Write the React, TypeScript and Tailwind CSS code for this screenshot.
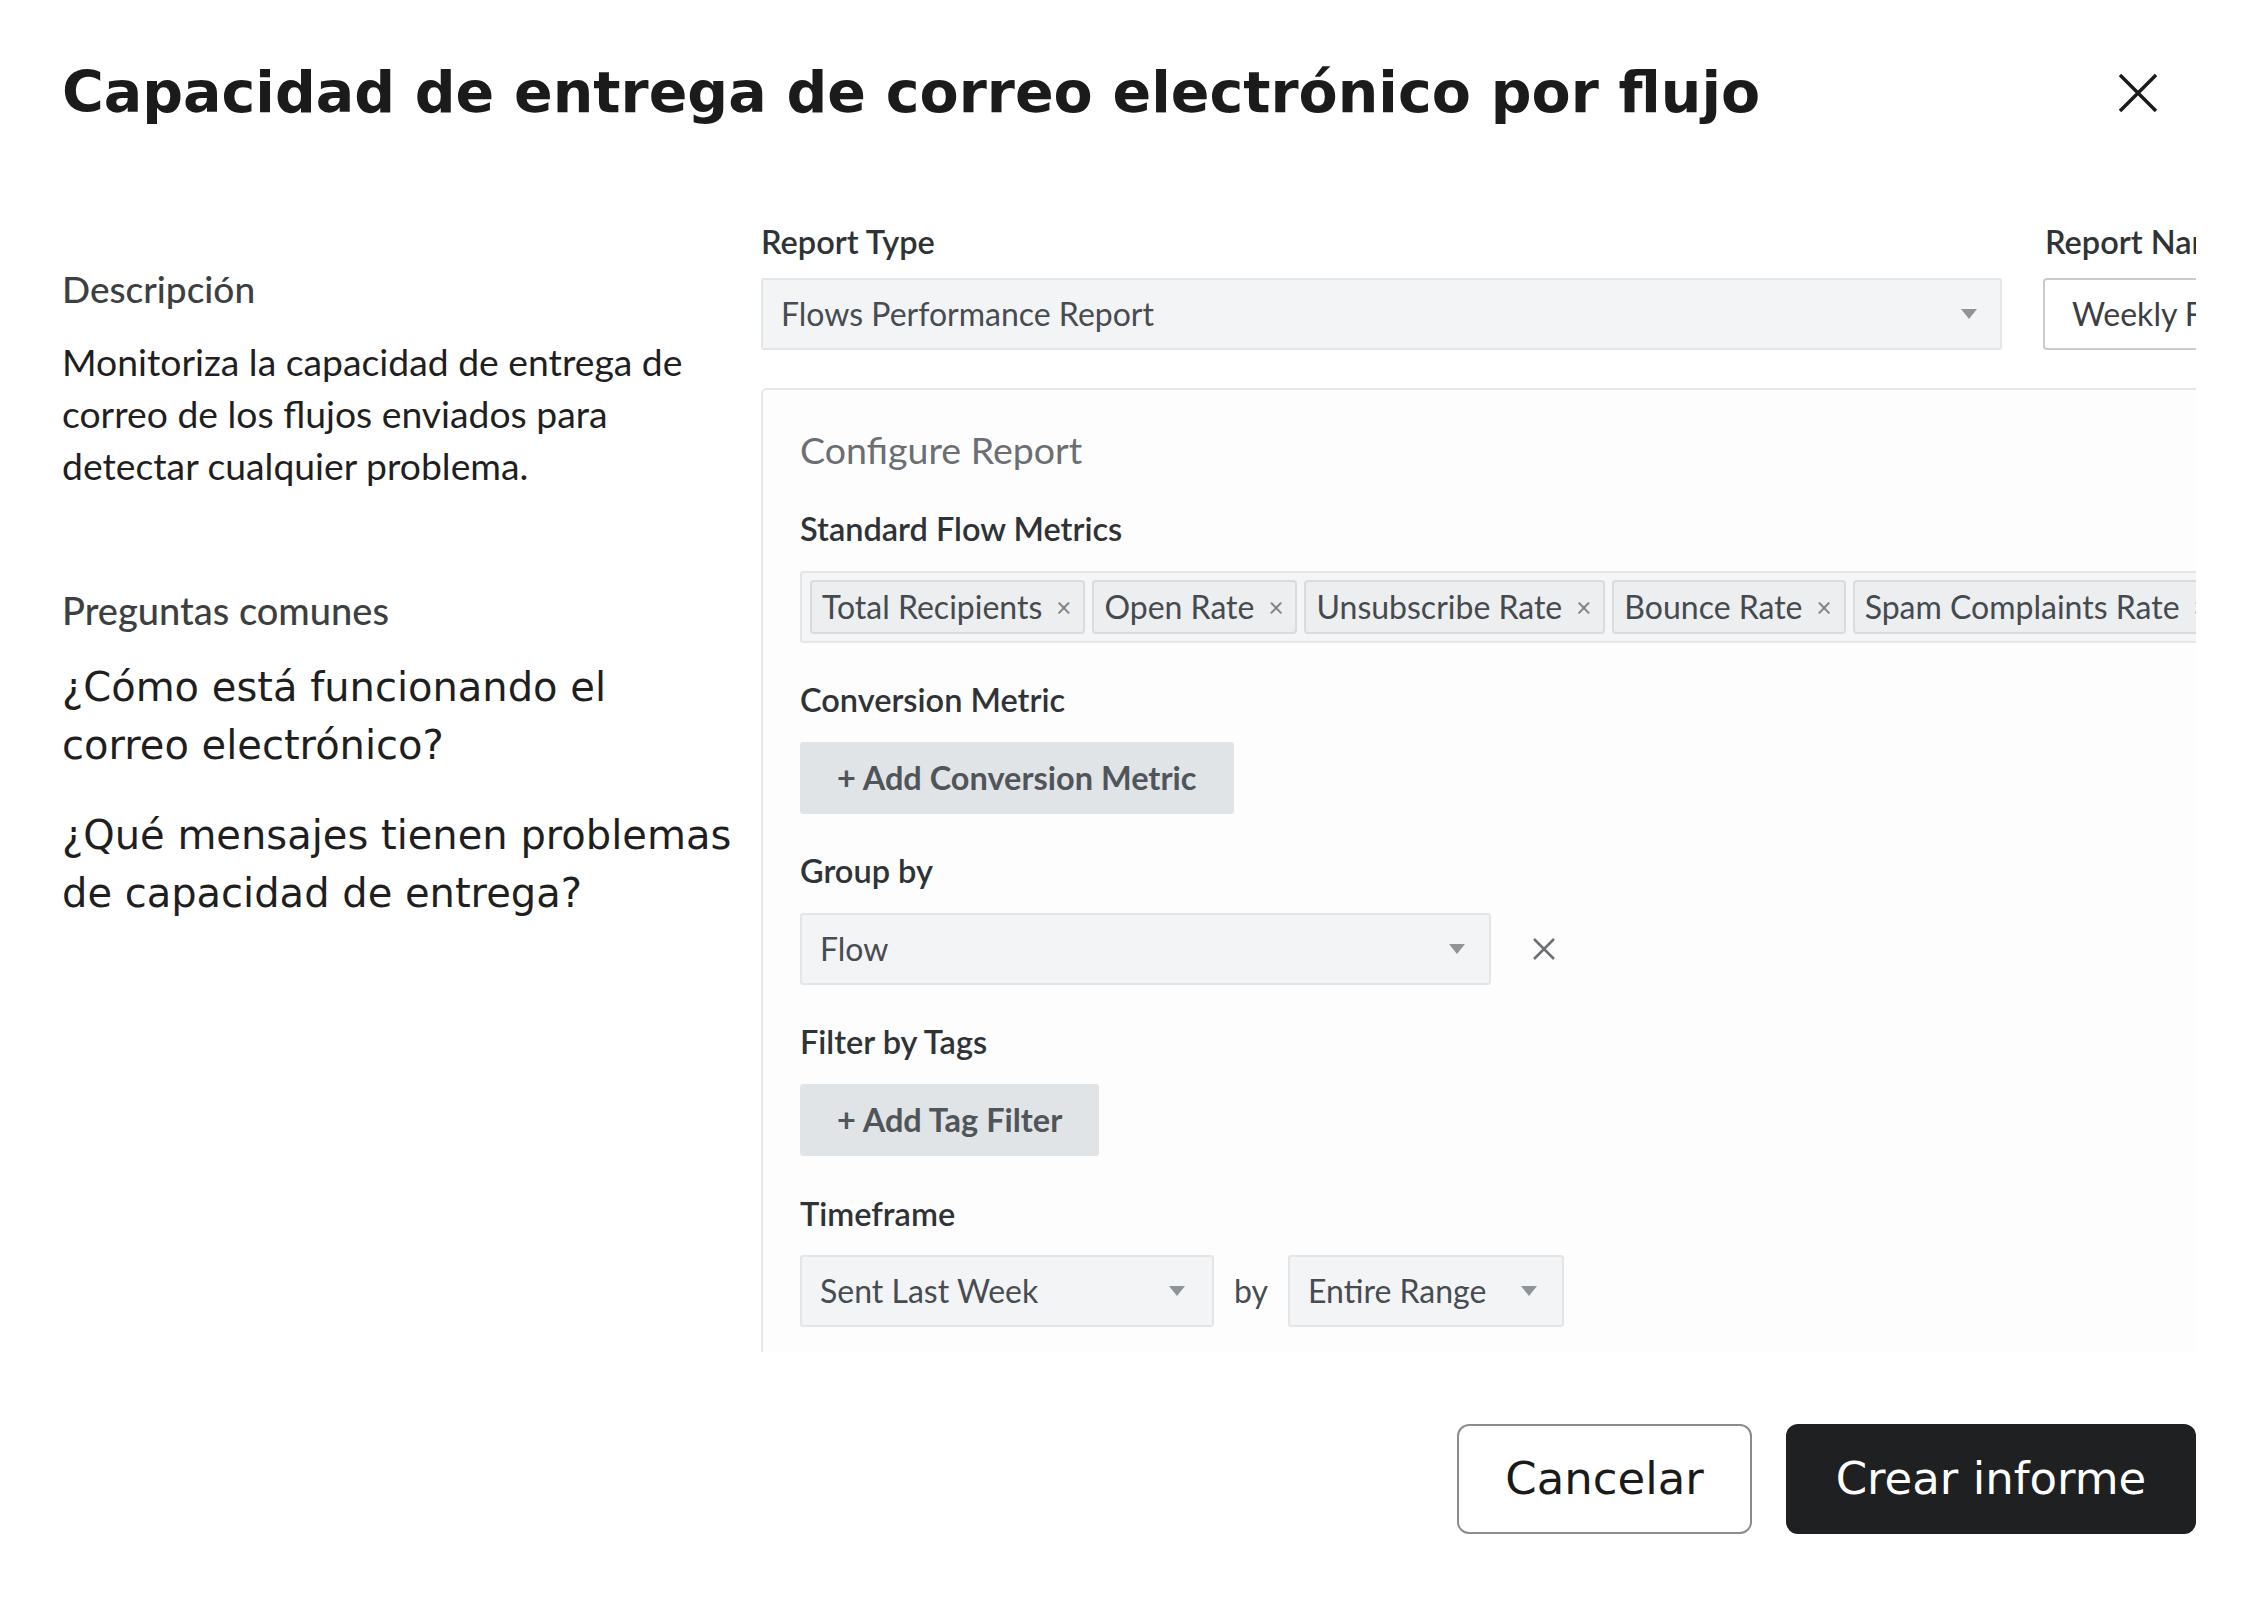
import React from 'react';

const metrics = ['Total Recipients', 'Open Rate', 'Unsubscribe Rate', 'Bounce Rate', 'Spam Complaints Rate', 'Click Rate'];

function Caret() {
  return (
    <svg width="16" height="10" viewBox="0 0 16 10" className="shrink-0">
      <path d="M0 0h16L8 10z" fill="#8f9499" />
    </svg>
  );
}

function Select({value, className}: {value: string; className: string}) {
  return (
    <div className={'flex h-[72px] shrink-0 items-center justify-between rounded-[3px] border-2 border-[#e3e5e7] bg-[#f3f4f5] pl-[18px] text-[32px] text-[#474c51] ' + className}>
      <span>{value}</span>
      <Caret />
    </div>
  );
}

function Label({children}: {children: React.ReactNode}) {
  return <div className="h-[40px] text-[32.5px] font-semibold leading-[40px] text-[#2f3336]">{children}</div>;
}

function GrayButton({children}: {children: React.ReactNode}) {
  return (
    <button className="mt-[22px] flex h-[72px] items-center rounded-[3px] bg-[#e1e4e6] px-[37px] text-[32.5px] font-bold text-[#50555a]">
      {children}
    </button>
  );
}

export default function App() {
  return (
    <div className="flex h-[1600px] w-[2255px] flex-col bg-white font-['Lato',sans-serif]">
      <header className="flex h-[186px] shrink-0 items-center justify-between pl-[62px] pr-[97px]">
        <h1 className="font-['DejaVu_Sans',sans-serif] text-[57px] font-bold text-[#1b1b1b]">
          Capacidad de entrega de correo electrónico por flujo
        </h1>
        <button aria-label="Cerrar">
          <svg width="40" height="40" viewBox="0 0 40 40">
            <path d="M2 2L38 38M38 2L2 38" stroke="#1b1b1b" strokeWidth="3.5" />
          </svg>
        </button>
      </header>

      <div className="flex h-[1166px] shrink-0 pl-[62px]">
        <aside className="w-[699px] shrink-0 pr-[27px]">
          <div className="mt-[83px] text-[37px] font-medium leading-[40px] text-[#3d3f41]">Descripción</div>
          <p className="mt-[27px] max-w-[650px] text-[37.3px] leading-[52px] text-[#1f1f1f]">
            Monitoriza la capacidad de entrega de correo de los flujos enviados para detectar cualquier problema.
          </p>
          <div className="mt-[98px] text-[38px] font-medium leading-[40px] text-[#3d3f41]">Preguntas comunes</div>
          <p className="mt-[28px] font-['DejaVu_Sans',sans-serif] text-[40px] leading-[58px] text-[#1f1f1f]">
            ¿Cómo está funcionando el correo electrónico?
          </p>
          <p className="mt-[32px] font-['DejaVu_Sans',sans-serif] text-[40px] leading-[58px] text-[#1f1f1f]">
            ¿Qué mensajes tienen problemas de capacidad de entrega?
          </p>
        </aside>

        <section className="w-[1435px] shrink-0 overflow-hidden pt-[36px]">
          <div className="flex gap-[41px]">
            <div className="shrink-0">
              <Label>Report Type</Label>
              <Select value="Flows Performance Report" className="mt-[16px] w-[1241px] pr-[23px]" />
            </div>
            <div className="shrink-0">
              <div className="pl-[2px]">
                <Label>Report Name</Label>
              </div>
              <div className="mt-[16px] flex h-[72px] w-[400px] items-center rounded-[4px] border-2 border-[#c9cbcd] bg-white pl-[27px] text-[32px] text-[#3b3f43]">
                Weekly Flows Report
              </div>
            </div>
          </div>

          <div className="mt-[38px] h-[1100px] w-[1600px] rounded-[6px] border-2 border-[#e7e8e9] bg-[#fdfdfd] pl-[37px] pt-[37px]">
            <div className="text-[37.5px] leading-[46px] text-[#6b6f73]">Configure Report</div>

            <div className="mt-[36px]">
              <Label>Standard Flow Metrics</Label>
              <div className="mt-[22px] flex h-[72px] w-[1500px] items-center gap-[7px] rounded-[3px] border-2 border-[#e3e5e7] bg-[#f4f5f6] pl-[8px]">
                {metrics.map(m => (
                  <span
                    key={m}
                    className="flex h-[54px] shrink-0 items-center rounded-[4px] border-2 border-[#d9dbdd] bg-[#eceef0] pl-[10px] pr-[12px] text-[32px] text-[#454a4f]"
                  >
                    {m}
                    <span className="ml-[14px] text-[26px] text-[#7d8185]">×</span>
                  </span>
                ))}
              </div>
            </div>

            <div className="mt-[37px]">
              <Label>Conversion Metric</Label>
              <GrayButton>+ Add Conversion Metric</GrayButton>
            </div>

            <div className="mt-[37px]">
              <Label>Group by</Label>
              <div className="mt-[22px] flex items-center">
                <Select value="Flow" className="w-[691px] pr-[24px]" />
                <svg width="24" height="24" viewBox="0 0 24 24" className="ml-[41px]">
                  <path d="M2 2L22 22M22 2L2 22" stroke="#6b7075" strokeWidth="2.5" />
                </svg>
              </div>
            </div>

            <div className="mt-[37px]">
              <Label>Filter by Tags</Label>
              <GrayButton>+ Add Tag Filter</GrayButton>
            </div>

            <div className="mt-[38px]">
              <Label>Timeframe</Label>
              <div className="mt-[21px] flex items-center">
                <Select value="Sent Last Week" className="w-[414px] pr-[27px]" />
                <span className="mx-[20px] text-[32px] text-[#474c51]">by</span>
                <Select value="Entire Range" className="w-[276px] pr-[25px]" />
              </div>
            </div>
          </div>
        </section>
      </div>

      <footer className="flex justify-end gap-[34px] pr-[59px] pt-[72px] font-['DejaVu_Sans',sans-serif]">
        <button className="h-[110px] w-[295px] rounded-[12px] border-2 border-[#8c8c8c] bg-white text-[45px] text-[#1a1a1a]">
          Cancelar
        </button>
        <button className="h-[110px] w-[410px] rounded-[12px] bg-[#1f2022] text-[45px] text-white">
          Crear informe
        </button>
      </footer>
    </div>
  );
}
